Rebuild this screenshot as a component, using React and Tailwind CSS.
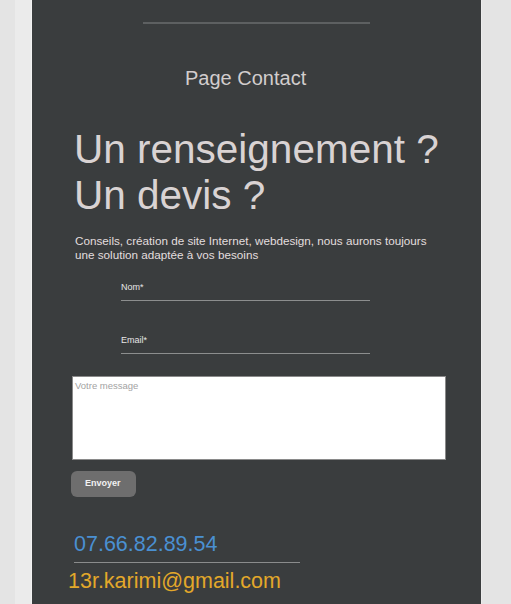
import React from 'react'

function Field({ label, className }) {
  return (
    <div className={`ml-[89px] w-[249px] ${className}`}>
      <div className="text-[9px] leading-[10px] text-[#e6e6e6]">{label}</div>
      <div className="mt-[8px] h-px bg-[#8c8e8e]"></div>
    </div>
  )
}

function App() {
  return (
    <div className="flex min-h-[604px] bg-[#e4e4e4]" style={{ fontFamily: '"Liberation Sans", Arial, sans-serif' }}>
      <div className="w-[15px] shrink-0 bg-[#e4e4e4]"></div>
      <div className="w-[17px] shrink-0 bg-[#ebebeb] border-r border-[#f2f2f2]"></div>

      <div className="w-[449px] shrink-0 bg-[#3a3d3e] flex flex-col pb-[14px]">
        <div className="mt-[22px] ml-[111px] w-[227px] h-[2px] bg-[#5d6061]"></div>

        <h2 className="mt-[43px] ml-[153px] text-[20px] leading-[23px] text-[#d2cdcd]">Page Contact</h2>

        <h1 className="mt-[36px] ml-[42px] text-[40.5px] leading-[46px] text-[#d9d3d3]">
          Un renseignement ?<br />Un devis ?
        </h1>

        <p className="mt-[16px] ml-[43px] w-[358px] text-[11.7px] leading-[14px] text-[#e2dede]">
          Conseils, création de site Internet, webdesign, nous aurons toujours une solution adaptée à vos besoins
        </p>

        <Field label="Nom*" className="mt-[20px]" />
        <Field label="Email*" className="mt-[34px]" />

        <textarea
          placeholder="Votre message"
          className="mt-[22px] ml-[40px] w-[374px] h-[84px] bg-white border border-[#8a8a8a] px-[2px] py-[3px] text-[9.5px] leading-[11px] text-black placeholder:text-[#a3a3a3] resize-none outline-none"
        ></textarea>

        <button className="mt-[11px] ml-[39px] w-[65px] h-[26px] rounded-[6px] bg-[#6e6e6e] text-[9px] font-bold text-[#f2f2f2] text-left pl-[14px]">
          Envoyer
        </button>

        <a className="mt-[35px] ml-[42px] text-[21.5px] leading-[25px] text-[#4a90d2]">07.66.82.89.54</a>
        <div className="mt-[5px] ml-[42px] w-[226px] h-px bg-[#8a8c8c]"></div>
        <a className="mt-[6px] ml-[36px] text-[21.5px] leading-[25px] text-[#e3a82a]">13r.karimi@gmail.com</a>
      </div>

      <div className="flex-1 bg-[#e4e4e4] border-l border-[#ececec]"></div>
    </div>
  )
}

export default App
